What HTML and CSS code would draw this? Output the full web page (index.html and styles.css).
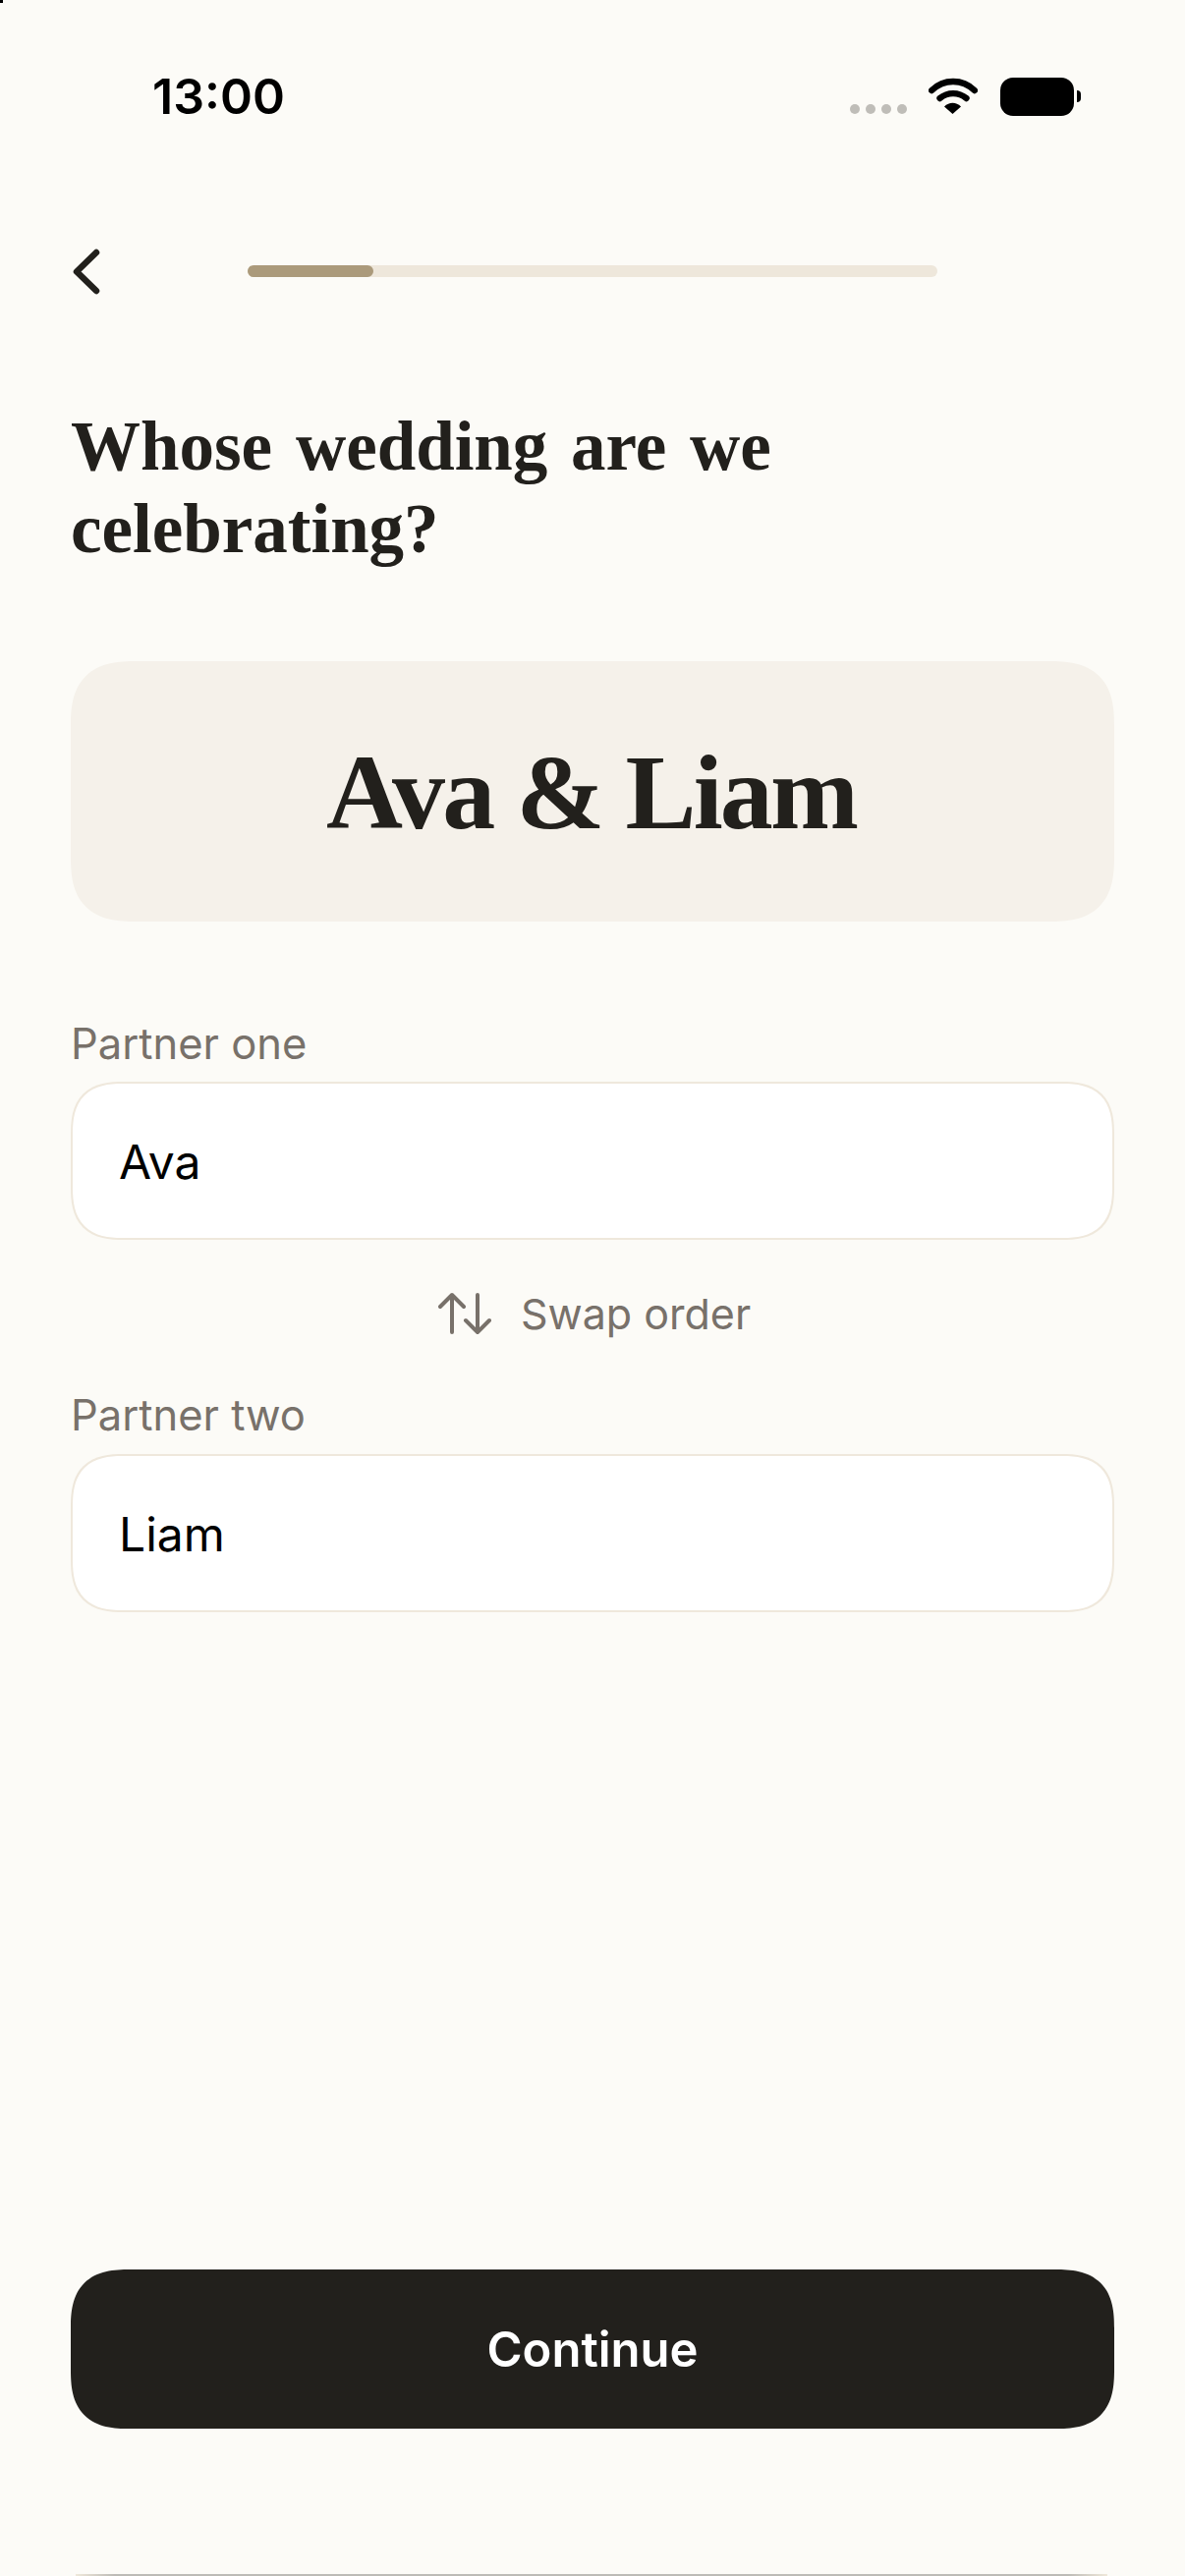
FILE: index.html
```html
<!DOCTYPE html>
<html lang="en">
<head>
  <meta charset="UTF-8">
  <meta name="viewport" content="width=device-width, initial-scale=1.0">
  <title>Whose wedding are we celebrating?</title>
  <link rel="stylesheet" href="styles.css">
</head>
<body>
  <div class="corner-mark"></div>
  <main class="screen">
    <header class="status-bar">
      <span class="status-time">13:00</span>
      <div class="status-icons">
        <div class="signal-dots"><i></i><i></i><i></i><i></i></div>
        <svg class="wifi" width="50" height="38" viewBox="0 0 50 38">
          <path d="M3.200 13C15.500 1 34.500 1 46.800 13" fill="none" stroke="#000" stroke-width="6.400" stroke-linecap="round"/>
          <path d="M11.500 21C19.500 14.500 30.500 14.500 38.500 21" fill="none" stroke="#000" stroke-width="6.400" stroke-linecap="round"/>
          <path d="M24.500 37L16 29.500C21 24.500 28 24.500 33 29.500Z"/>
        </svg>
        <div class="battery"></div>
      </div>
    </header>

    <nav class="top-nav">
      <svg class="back" width="32" height="51" viewBox="0 0 32 51">
        <path d="M26 6L6 25.500L26 45" fill="none" stroke="#22201c" stroke-width="6.500" stroke-linecap="round" stroke-linejoin="round"/>
      </svg>
      <div class="progress"><div class="progress-fill"></div></div>
    </nav>

    <h1 class="title">Whose wedding are we celebrating?</h1>

    <section class="preview">Ava &amp; Liam</section>

    <label class="field-label first">Partner one</label>
    <div class="field">Ava</div>

    <div class="swap">
      <svg width="54" height="44" viewBox="0 0 54 44">
        <path d="M14 41V3M2 15L14 3L26 15M40 3V41M28 29L40 41L52 29" fill="none" stroke="#78716a" stroke-width="4" stroke-linecap="round" stroke-linejoin="round"/>
      </svg>
      <span>Swap order</span>
    </div>

    <label class="field-label second">Partner two</label>
    <div class="field">Liam</div>

    <button class="continue">Continue</button>
    <div class="home-bar"></div>
  </main>
</body>
</html>
```

FILE: styles.css
```css
* {
  box-sizing: border-box;
}
html, body {
  margin: 0;
  background-color: #fcfbf7;
}
.corner-mark {
  position: absolute;
  left: 0;
  top: 0;
  width: 3px;
  height: 3px;
  background-color: #000;
}
.screen {
  width: 1206px;
  height: 2622px;
  padding: 0 72px;
  display: flex;
  flex-direction: column;
  overflow: hidden;
  font-family: Inter, "Liberation Sans", sans-serif;
  color: #000;
}

/* status bar */
.status-bar {
  height: 118px;
  padding: 67px 41px 0 83px;
  display: flex;
  justify-content: space-between;
}
.status-time {
  font-size: 50px;
  font-weight: 600;
  line-height: 62px;
}
.status-icons {
  display: flex;
  align-items: flex-start;
  padding-top: 12px;
}
.signal-dots {
  display: flex;
  gap: 6px;
  margin-top: 27px;
  margin-right: 22px;
}
.signal-dots i {
  width: 10px;
  height: 10px;
  border-radius: 50%;
  background-color: #bfbdb8;
}
.wifi {
  margin-right: 23px;
}
.battery {
  position: relative;
  width: 75px;
  height: 39px;
  border-radius: 13px;
  background-color: #000;
}
.battery::after {
  content: "";
  position: absolute;
  left: 78px;
  top: 13px;
  width: 4px;
  height: 12px;
  border-radius: 0 6px 6px 0;
  background-color: #000;
}

/* back + progress */
.top-nav {
  margin-top: 133px;
  height: 51px;
  display: flex;
  align-items: center;
}
.back {
  flex: none;
}
.progress {
  width: 702px;
  height: 12px;
  margin-left: 148px;
  margin-bottom: 1px;
  border-radius: 6px;
  background-color: #eee7db;
}
.progress-fill {
  width: 128px;
  height: 12px;
  border-radius: 6px;
  background-color: #ab9a7b;
}

.title {
  margin: 110px 0 0;
  width: 760px;
  font-family: "Liberation Serif", "DejaVu Serif", serif;
  font-size: 71px;
  line-height: 84px;
  font-weight: 700;
  word-spacing: 6px;
  color: #22201c;
}
.preview {
  margin-top: 93px;
  height: 265px;
  padding: 3px 3px 0 0;
  border-radius: 66px;
  corner-shape: superellipse(1.4);
  background-color: #f5f1ea;
  display: flex;
  align-items: center;
  justify-content: center;
  font-family: "Liberation Serif", "DejaVu Serif", serif;
  font-size: 108px;
  font-weight: 700;
  letter-spacing: -2.900px;
  color: #22201c;
}

/* form */
.field-label {
  display: block;
  height: 64px;
  font-size: 43.500px;
  line-height: 50px;
  color: #78716a;
}
.field-label.first {
  margin-top: 99px;
}
.field-label.second {
  margin-top: 51px;
  height: 65px;
}
.field {
  height: 161px;
  padding: 2px 0 0 47px;
  display: flex;
  align-items: center;
  border: 2px solid #efe8dc;
  border-radius: 54px;
  corner-shape: superellipse(1.4);
  background-color: #fff;
  font-size: 48px;
}
.swap {
  margin-top: 48px;
  height: 54px;
  padding-left: 4px;
  display: flex;
  align-items: center;
  justify-content: center;
  gap: 30px;
  font-size: 43px;
  color: #78716a;
}

.continue {
  margin-top: auto;
  height: 162px;
  border: 0;
  border-radius: 60px;
  corner-shape: superellipse(1.4);
  background-color: #22201c;
  font-family: inherit;
  font-size: 49px;
  font-weight: 600;
  color: #fff;
}
.home-bar {
  margin: 148px 7px 0 5px;
  height: 2px;
  flex: none;
  background: linear-gradient(90deg, #efe8da 0, #bdbbb6 40px, #bdbbb6 calc(100% - 40px), #efe8da 100%);
}
```
